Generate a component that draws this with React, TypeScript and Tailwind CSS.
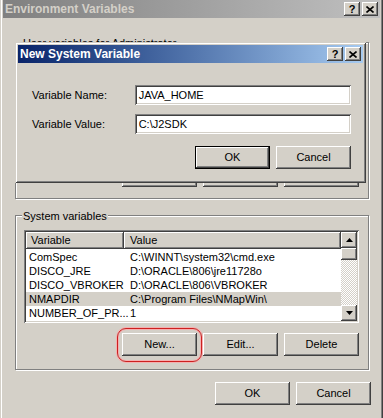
import React from "react"

const face = "bg-[#d4d0c8]"
const raised = "shadow-[inset_-1px_-1px_#404040,inset_1px_1px_#fff,inset_-2px_-2px_#808080]"
const sunken = "shadow-[inset_1px_1px_#808080,inset_-1px_-1px_#fff,inset_2px_2px_#404040,inset_-2px_-2px_#d4d0c8]"
const frame = "shadow-[inset_1px_1px_#d4d0c8,inset_-1px_-1px_#404040,inset_2px_2px_#fff,inset_-2px_-2px_#808080]"
const etched = "border border-[#808080] shadow-[inset_1px_1px_#fff,1px_1px_#fff]"

const rows = [
  { name: "ComSpec", value: "C:\\WINNT\\system32\\cmd.exe" },
  { name: "DISCO_JRE", value: "D:\\ORACLE\\806\\jre11728o" },
  { name: "DISCO_VBROKER", value: "D:\\ORACLE\\806\\VBROKER" },
  { name: "NMAPDIR", value: "C:\\Program Files\\NMapWin\\", selected: true },
  { name: "NUMBER_OF_PR...", value: "1" },
]

function Btn({ label, isDefault }: { label: string; isDefault?: boolean }) {
  if (isDefault) {
    return (
      <div className="w-[75px] h-[23px] border border-black">
        <div className={`w-full h-full flex items-center justify-center ${face} ${raised}`}>{label}</div>
      </div>
    )
  }
  return (
    <div className={`w-[75px] h-[23px] flex items-center justify-center ${face} ${raised}`}>{label}</div>
  )
}

function TitleButtons() {
  return (
    <div className="flex items-center gap-[2px]">
      <div className={`w-[16px] h-[14px] flex items-center justify-center ${face} ${raised} text-black font-bold text-[11px] leading-none`}>?</div>
      <div className={`w-[16px] h-[14px] flex items-center justify-center ${face} ${raised}`}>
        <svg width="8" height="7" viewBox="0 0 8 7">
          <path d="M0.5 0.5 L7.5 6.5 M7.5 0.5 L0.5 6.5" stroke="#000" strokeWidth="1.6" />
        </svg>
      </div>
    </div>
  )
}

function Arrow({ up }: { up?: boolean }) {
  return (
    <div className={`w-[16px] h-[16px] flex items-center justify-center ${face} ${raised}`}>
      <svg width="7" height="4" viewBox="0 0 7 4">
        <path d={up ? "M3.5 0 L7 4 L0 4 Z" : "M0 0 L7 0 L3.5 4 Z"} fill="#000" />
      </svg>
    </div>
  )
}

export default function App() {
  return (
    <div className={`relative w-[383px] h-[418px] overflow-hidden ${face} text-[11px] text-black font-['Liberation_Sans',Arial,sans-serif] shadow-[inset_1px_0_#d4d0c8,inset_2px_0_#fff,inset_-1px_0_#404040,inset_-2px_0_#808080]`}>
      {/* outer title bar (inactive) */}
      <div className="mx-[3px] h-[18px] flex items-center justify-between pl-[2px] pr-[2px] bg-linear-to-r from-[#808080] to-[#c0c0c0]">
        <span className="font-bold text-[12px] text-[#d4d0c8]">Environment Variables</span>
        <TitleButtons />
      </div>

      {/* user variables (mostly hidden) */}
      <div className={`relative ml-[15px] mt-[24px] w-[354px] h-[157px] ${etched} flex flex-col justify-end pb-[11px] pr-[9px]`}>
        <span className={`absolute left-[6px] -top-[6px] px-[1px] leading-[12px] ${face}`}>User variables for Administrator</span>
        <div className="flex justify-end gap-[6px]">
          <Btn label="New..." />
          <Btn label="Edit..." />
          <Btn label="Delete" />
        </div>
      </div>

      {/* system variables */}
      <div className={`relative ml-[15px] mt-[16px] w-[354px] ${etched} pt-[14px] pl-[8px] pb-[13px] pr-[9px]`}>
        <span className={`absolute left-[6px] -top-[8px] px-[1px] ${face}`}>System variables</span>
        <div className={`w-[335px] h-[93px] bg-white p-[2px] flex ${sunken}`}>
          <div className="flex-1 flex flex-col">
            <div className="flex h-[17px]">
              <div className={`w-[98px] flex items-center pl-[5px] ${face} ${raised}`}>Variable</div>
              <div className={`flex-1 flex items-center pl-[6px] ${face} ${raised}`}>Value</div>
            </div>
            <div className="pt-[1px]">
              {rows.map(r => (
                <div key={r.name} className={`flex h-[14px] items-center ${r.selected ? face : ""}`}>
                  <span className="w-[98px] pl-[3px] whitespace-nowrap">{r.name}</span>
                  <span className="pl-[6px] whitespace-nowrap">{r.value}</span>
                </div>
              ))}
            </div>
          </div>
          <div className="w-[16px] flex flex-col">
            <Arrow up />
            <div className={`h-[12px] ${face} ${raised}`} />
            <div className="flex-1 bg-[repeating-conic-gradient(#fff_0%_25%,#d4d0c8_0%_50%)] bg-[length:2px_2px]" />
            <Arrow />
          </div>
        </div>
        <div className="mt-[10px] flex justify-end gap-[6px]">
          <div className="relative">
            <Btn label="New..." />
            <div className="absolute -left-[5px] -top-[5px] -right-[5px] -bottom-[6px] rounded-[9px] border-[1.5px] border-[#cc2020] shadow-[0_0_0_1px_#f4b0b0,inset_0_0_0_1px_#f4b0b0]" />
          </div>
          <Btn label="Edit..." />
          <Btn label="Delete" />
        </div>
      </div>

      {/* OK / Cancel */}
      <div className="mt-[12px] mr-[12px] flex justify-end gap-[6px]">
        <Btn label="OK" />
        <Btn label="Cancel" />
      </div>

      {/* New System Variable dialog, lies over the window */}
      <div className={`absolute left-[15px] top-[42px] w-[351px] h-[141px] ${face} ${frame} p-[3px] flex flex-col`}>
        <div className="h-[18px] flex items-center justify-between pl-[2px] pr-[2px] bg-linear-to-r from-[#0a246a] to-[#a6caf0]">
          <span className="font-bold text-[12px] text-white">New System Variable</span>
          <TitleButtons />
        </div>
        <div className="pl-[14px] pr-[12px] pt-[22px] flex flex-col">
          <div className="flex items-center h-[20px]">
            <span className="w-[103px]">Variable Name:</span>
            <div className={`w-[217px] h-[20px] bg-white flex items-center pl-[4px] ${sunken}`}>JAVA_HOME</div>
          </div>
          <div className="flex items-center h-[20px] mt-[9px]">
            <span className="w-[103px]">Variable Value:</span>
            <div className={`w-[217px] h-[20px] bg-white flex items-center pl-[4px] ${sunken}`}>C:\J2SDK</div>
          </div>
          <div className="mt-[12px] flex justify-end gap-[6px]">
            <Btn label="OK" isDefault />
            <Btn label="Cancel" />
          </div>
        </div>
      </div>
    </div>
  )
}
